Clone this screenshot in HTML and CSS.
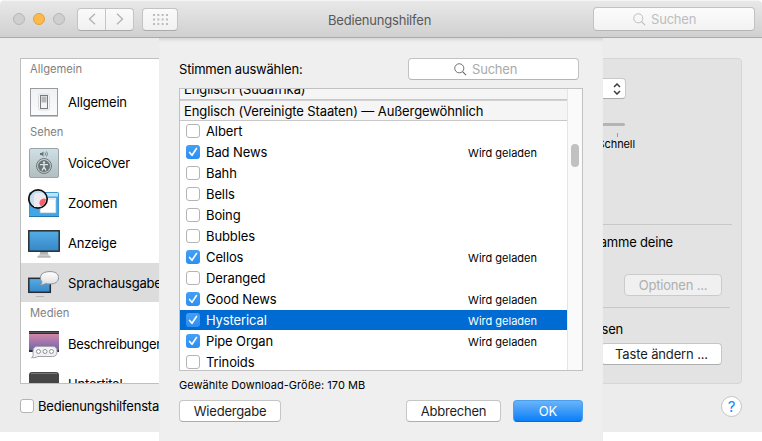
FILE: index.html
```
<!DOCTYPE html>
<html lang="de">
<head>
<meta charset="utf-8">
<title>Bedienungshilfen</title>
<link rel="stylesheet" href="styles.css">
</head>
<body>
<svg width="0" height="0" class="defs">
  <defs>
    <linearGradient id="screen" x1="0" y1="0" x2="0" y2="1"><stop offset="0" stop-color="#55ade6"/><stop offset="1" stop-color="#3587c6"/></linearGradient>
    <linearGradient id="metal" x1="0" y1="0" x2="0" y2="1"><stop offset="0" stop-color="#cfe0e5"/><stop offset="1" stop-color="#b2bec0"/></linearGradient>
    <linearGradient id="plate" x1="0" y1="0" x2="0" y2="1"><stop offset="0" stop-color="#eff1f3"/><stop offset="1" stop-color="#fafbfc"/></linearGradient>
    <linearGradient id="sunset" x1="0" y1="0" x2="0" y2="1"><stop offset="0" stop-color="#e58daa"/><stop offset="1" stop-color="#6460ad"/></linearGradient>
    <linearGradient id="stand" x1="0" y1="0" x2="0" y2="1"><stop offset="0" stop-color="#999"/><stop offset="1" stop-color="#ddd"/></linearGradient>
    <linearGradient id="bubble" x1="0" y1="0" x2="0" y2="1"><stop offset="0" stop-color="#fff"/><stop offset="1" stop-color="#dedee2"/></linearGradient>
    <symbol id="lens" viewBox="0 0 14 14"><circle cx="5.7" cy="5.7" r="4.9" fill="none" stroke="currentColor"/><path d="M9.2 9.2 13 13" stroke="currentColor" stroke-width="1.2"/></symbol>
    <symbol id="check" viewBox="0 0 14 14"><path d="M3.6 7.4 6 10.3 10.5 3.5" fill="none" stroke="#fff" stroke-width="1.6" stroke-linecap="round" stroke-linejoin="round"/></symbol>
  </defs>
</svg>
<div class="window">
  <header class="toolbar">
    <div class="lights"><i></i><i class="amber"></i><i></i></div>
    <div class="nav">
      <span><svg width="8" height="12" viewBox="0 0 8 12"><path d="M7 .7 1.5 6 7 11.3"/></svg></span>
      <span><svg width="8" height="12" viewBox="0 0 8 12"><path d="M1 .7 6.5 6 1 11.3"/></svg></span>
    </div>
    <div class="all"><svg width="15" height="11" viewBox="0 0 15 11"><path d="M0 1h15M0 5.500h15M0 10h15"/></svg></div>
    <h1>Bedienungshilfen</h1>
    <div class="search dim"><svg width="13" height="13"><use href="#lens"/></svg><span>Suchen</span></div>
  </header>
  <main class="body">
    <nav class="sidebar">
      <h2 class="first">Allgemein</h2>
      <div class="item"><svg width="32" height="32" viewBox="0 0 32 32"><rect x="2.500" y="2.500" width="27" height="27" fill="url(#plate)" stroke="#989b9f"/><path d="M2 30h28" stroke="#8a8d91"/><rect x="10.500" y="8" width="11" height="16" rx="1.500" fill="#f8f8f8" stroke="#d8dadc"/><rect x="12.500" y="9.500" width="7" height="13" fill="#f4f4f4" stroke="#777a80"/><path d="M13.500 10.500h5v6h-5z" fill="#b4b7bb"/></svg><span>Allgemein</span></div>
      <h2>Sehen</h2>
      <div class="item"><svg width="32" height="32" viewBox="0 0 32 32"><rect x="1.500" y="1.500" width="29" height="29" rx="1.500" fill="url(#metal)" stroke="#99a5a8"/><circle cx="16" cy="19" r="7.500" fill="none" stroke="#6c777a"/><circle cx="16" cy="19" r="6" fill="#687376"/><circle cx="16" cy="15.500" r="1.200" fill="#dce4e6"/><path d="M12 17.600h8M16 17.500v3M16 20l-2 3.500M16 20l2 3.500" stroke="#dce4e6" stroke-width="1.400" fill="none"/><path d="M12 6h1.500L15.500 4.500v5L13.500 8H12z" fill="#687376"/><path d="M17 5.500q1.200 1.500 0 3M18.500 4.500q2 2.500 0 5" fill="none" stroke="#687376" stroke-width=".8"/></svg><span>VoiceOver</span></div>
      <div class="item"><svg width="32" height="32" viewBox="0 0 32 32"><rect x="1.500" y="5.500" width="29" height="24" rx="1" fill="#42a5e5" stroke="#3c96cf"/><path d="M2 6h28v3.500H2z" fill="#bfe3f7"/><path d="M1 29.500h30" stroke="#2774aa"/><rect x="12" y="11" width="16" height="15" fill="#fff" stroke="#8cbad5" stroke-width=".7"/><path d="M12 11h16v2H12z" fill="#e5edf2"/><circle cx="10" cy="12" r="9.200" fill="#c4def1" stroke="#111" stroke-width="1.700"/><path d="M6 9q0-3 3-3h6q3 3 3 7-2 6-7 7H6z" fill="#eee8f0"/><path d="M18 12.200a4 4 0 1 0-4.500 7.400Q17.500 17 18 12.200z" fill="#f4626b"/></svg><span>Zoomen</span></div>
      <div class="item"><svg width="32" height="32" viewBox="0 0 32 32"><path d="M12.500 24h7l1 4 2 1v1h-13v-1l2-1z" fill="url(#stand)"/><path d="M9.500 30h13" stroke="#969696"/><rect x=".8" y="3.800" width="30.400" height="20.400" fill="url(#screen)" stroke="#282c30" stroke-width="1.500"/></svg><span>Anzeige</span></div>
      <div class="item selected"><svg width="32" height="32" viewBox="0 0 32 32"><path d="M9 25h6l1 3 1 1.500H7L8 28z" fill="#ddd"/><path d="M8 29.500h8" stroke="#b5b5b5"/><rect x=".8" y="11.300" width="21.500" height="14" fill="url(#screen)" stroke="#282c30" stroke-width="1.500"/><path d="M22 4.600c5.500 0 8.500 2 8.500 6s-3 6.400-8.500 6.400c-1.500 0-3-.2-4.500-.6-1.500 1-3.300 1.700-5.500 1.600 1.500-1 2-2 1.800-3.500-1-1-1.300-2.300-1.300-3.900 0-4 4-6 9.500-6z" fill="url(#bubble)" stroke="#8d9197"/></svg><span>Sprachausgabe</span></div>
      <h2>Medien</h2>
      <div class="item"><svg width="32" height="32" viewBox="0 0 32 32"><rect x="1" y="3" width="30" height="21" fill="url(#sunset)"/><path d="M1 3h30v3H1zM1 22h30v2H1z" fill="#303036"/><path d="M1 4.500h30" stroke="#666" stroke-width=".7"/><path d="M9.500 18.500h15q4.500 0 4.500 5t-4.500 5H10q-3 1.600-6.500 1.200 2-1.200 1.700-3.200Q5 25 5 23.500q0-5 4.500-5z" fill="#f1f1f4" stroke="#a2a2a9"/><g fill="#fff" stroke="#909096"><circle cx="10.500" cy="23.500" r="2"/><circle cx="17" cy="23.500" r="2"/><circle cx="23.500" cy="23.500" r="2"/></g></svg><span class="tight">Beschreibungen</span></div>
      <div class="item"><svg width="32" height="32" viewBox="0 0 32 32"><rect x="1" y="4" width="30" height="27" rx="3" fill="#464646"/><path d="M3 5.500h26" stroke="#777"/></svg><span>Untertitel</span></div>
    </nav>
    <section class="panel">
      <div class="popup"><svg width="8" height="12" viewBox="0 0 8 12"><path d="M1 4 4 1l3 3M1 8l3 3 3-3"/></svg></div>
      <div class="slider"></div>
      <div class="tick"></div>
      <small>Schnell</small>
      <hr>
      <p>amme deine</p>
      <div class="button disabled">Optionen ...</div>
      <hr class="short">
      <p class="keys">sen</p>
      <div class="button change">Taste ändern ...</div>
    </section>
  </main>
  <footer class="foot">
    <div class="status"><i class="box"></i><span>Bedienungshilfenstatus</span></div>
    <div class="help">?</div>
  </footer>
</div>
<div class="sheet">
  <div class="sheet-head"><span class="choose">Stimmen auswählen:</span><div class="search"><svg width="13" height="13"><use href="#lens"/></svg><span>Suchen</span></div></div>
  <div class="list">
    <div class="rows">
      <div class="group cut"><span>Englisch (Südafrika)</span></div>
      <div class="group"><span>Englisch (Vereinigte Staaten) — Außergewöhnlich</span></div>
      <div class="row"><i class="box"></i><span>Albert</span></div>
      <div class="row"><i class="box on"><svg><use href="#check"/></svg></i><span>Bad News</span><em>Wird geladen</em></div>
      <div class="row"><i class="box"></i><span>Bahh</span></div>
      <div class="row"><i class="box"></i><span>Bells</span></div>
      <div class="row"><i class="box"></i><span>Boing</span></div>
      <div class="row"><i class="box"></i><span>Bubbles</span></div>
      <div class="row"><i class="box on"><svg><use href="#check"/></svg></i><span>Cellos</span><em>Wird geladen</em></div>
      <div class="row"><i class="box"></i><span>Deranged</span></div>
      <div class="row"><i class="box on"><svg><use href="#check"/></svg></i><span>Good News</span><em>Wird geladen</em></div>
      <div class="row active"><i class="box on"><svg><use href="#check"/></svg></i><span>Hysterical</span><em>Wird geladen</em></div>
      <div class="row"><i class="box on"><svg><use href="#check"/></svg></i><span>Pipe Organ</span><em>Wird geladen</em></div>
      <div class="row"><i class="box"></i><span>Trinoids</span></div>
    </div>
    <div class="scroll"><i></i></div>
  </div>
  <div class="size"><span>Gewählte Download-Größe: 170 MB</span></div>
  <div class="actions"><div class="button play">Wiedergabe</div><div class="button cancel">Abbrechen</div><div class="button ok">OK</div></div>
</div>
</body>
</html>
```
FILE: styles.css
```
* { box-sizing: border-box; }
body { margin: 0; width: 762px; height: 441px; overflow: hidden; position: relative; background: #fff; color: #000; font: 13px/16px Inter, sans-serif; letter-spacing: -0.2px; }
h1, h2, p, hr { margin: 0; font: inherit; border: 0; }
i, em { font-style: normal; }
svg { display: block; flex: none; }
span { white-space: nowrap; }
.defs { position: absolute; }

.window { height: 432px; background: #ececec; border-radius: 5px 5px 0 0; overflow: hidden; }
.toolbar { height: 38px; display: flex; align-items: center; padding: 0 7px 0 13px; background: linear-gradient(#e8e8e8, #d0d0d0); border-top: 1px solid #f5f5f5; border-bottom: 1px solid #aaa; }
.lights { display: flex; gap: 8px; width: 64px; }
.lights i { width: 12px; height: 12px; border-radius: 50%; background: #cfcfcf; border: 1px solid #b7b7b7; }
.lights .amber { background: #fdb94c; border-color: #e2a03e; }
.nav, .all { height: 23px; display: flex; border: 1px solid #c3c3c3; border-bottom-color: #aaa; border-radius: 4px; background: linear-gradient(#fafafa, #f1f1f1); }
.nav { width: 57px; }
.nav span { flex: 1; display: flex; align-items: center; justify-content: center; }
.nav span + span { border-left: 1px solid #c6c6c6; }
.nav path { fill: none; stroke: #b4b4b4; stroke-width: 1.4; }
.all { width: 36px; margin-left: 8px; align-items: center; justify-content: center; }
.all path { stroke: #bdbdbd; stroke-width: 2; stroke-dasharray: 2 2.33; }
.toolbar h1 { margin-left: 150px; width: 104px; padding-top: 2px; color: #595959; white-space: nowrap; }
.search { width: 171px; height: 22px; display: flex; align-items: center; padding-left: 45px; gap: 5px; border: 1px solid #c2c2c2; border-bottom-color: #b5b5b5; border-radius: 4px; background: #fff; color: #aaa; }
.search svg { color: #666; }
.toolbar .search { width: 162px; height: 24px; margin-left: auto; padding-left: 39px; background: linear-gradient(#fcfcfc, #f2f2f2); color: #bdbdbd; }
.search.dim svg { color: #b9b9b9; }
.sheet .search { margin-right: 4px; }

.body { display: flex; justify-content: space-between; padding: 20px 20px 0; height: 346px; }
.sidebar { width: 200px; height: 326px; border: 1px solid #bfbfbf; background: #fff; overflow: hidden; }
.sidebar h2 { height: 21px; padding: 2px 0 0 9px; color: #7f7f7f; font-size: 11.2px; line-height: 17px; letter-spacing: 0; }
.sidebar .first { height: 23px; }
.item { height: 40px; display: flex; align-items: center; gap: 8px; padding-left: 7px; }
.item .tight { letter-spacing: -0.32px; }
.item.selected { background: #dcdcdc; height: 39px; margin-bottom: 1px; }
.panel { width: 502px; height: 326px; display: flex; flex-direction: column; align-items: flex-end; padding: 20px 19px 0 0; border: 1px solid #d6d6d6; border-radius: 4px; background: #e3e3e3; }
.popup { width: 160px; height: 21px; margin: -1px 96px 0 0; display: flex; align-items: center; justify-content: flex-end; padding-right: 4px; background: #fff; border: 1px solid #c8c8c8; border-bottom-color: #ababab; border-radius: 4px; }
.popup path { fill: none; stroke: #3c3c3c; stroke-width: 1.5; }
.slider { width: 200px; height: 3px; margin: 24px 97px 0 0; border-radius: 2px; background: #b4b4b4; }
.tick { width: 1px; height: 4px; margin: 7px 104px 0 0; background: #999; }
.panel small { margin: 1px 87px 0 0; font-size: 11px; line-height: 13px; letter-spacing: -0.1px; }
.panel hr { width: 440px; height: 1px; margin: 73px -10px 0 0; background: #c8c8c8; }
.panel p { margin: 9px 49px 0 0; }
.panel .disabled { width: 98px; margin-top: 24px; background: #f0f0f0; border-color: #cbcbcb; color: #aeaeae; }
.panel .short { margin: 11px -8px 0 0; }
.panel .keys { margin: 13px 99px 0 0; }
.panel .change { width: 121px; margin-top: 6px; letter-spacing: -0.14px; }
.button { height: 22px; display: flex; align-items: center; justify-content: center; padding-bottom: 1px; background: #fff; border: 1px solid #c6c6c6; border-bottom-color: #aeaeae; border-radius: 4px; white-space: nowrap; color: #1d1d1d; }
.foot { display: flex; justify-content: space-between; padding: 12px 20px 0; }
.status { display: flex; align-items: center; gap: 4px; height: 20px; }
.help { width: 21px; height: 21px; border: 1px solid #c3c3c3; border-radius: 50%; background: #fff; color: #1687f5; font-size: 15px; line-height: 19px; text-align: center; }
.box { width: 14px; height: 14px; flex: none; border: 1px solid #b4b4b4; border-radius: 3px; background: #fff; }
.box.on { border: 0; background: linear-gradient(#459ff4, #2b8ff2); }
.box svg { width: 14px; height: 14px; }

.sheet { position: absolute; left: 159px; top: 38px; width: 444px; height: 403px; padding: 20px 20px 0; background: #efefef; box-shadow: inset 0 4px 4px -3px #ccc; }
.sheet-head { display: flex; justify-content: space-between; align-items: center; height: 22px; }
.list { width: 404px; height: 283px; margin-top: 8px; display: flex; border: 1px solid #c2c2c2; background: #fff; overflow: hidden; }
.rows { width: 387px; flex: none; letter-spacing: -0.11px; }
.group { height: 21px; display: flex; align-items: center; padding-left: 4px; background: #f5f5f5; border-bottom: 1px solid #c8c8c8; }
.cut { margin-top: -10px; }
.cut + .group { border-top: 1px solid #d2d2d2; }
.row { height: 20px; margin-bottom: 1px; display: flex; align-items: center; gap: 6px; padding: 0 30px 0 6px; }
.row em { margin-left: auto; font-size: 11px; letter-spacing: 0; padding-top: 1px; }
.active { background: #006cd3; color: #fff; }
.scroll { flex: 1; padding: 55px 0 0 3px; background: #fafafa; border-left: 1px solid #e5e5e5; }
.scroll i { display: block; width: 8px; height: 23px; border-radius: 4px; background: #c1c1c1; }
.size { margin-top: 6px; font-size: 11px; line-height: 16px; letter-spacing: 0.04px; }
.actions { display: flex; margin-top: 7px; }
.play { width: 102px; }
.cancel { width: 95px; margin-left: 125px; }
.ok { width: 70px; margin-left: 12px; color: #fff; background: linear-gradient(#6bb4f8, #0a7ff8); border-color: #4aa0f0; border-bottom-color: #0869d8; }
```
